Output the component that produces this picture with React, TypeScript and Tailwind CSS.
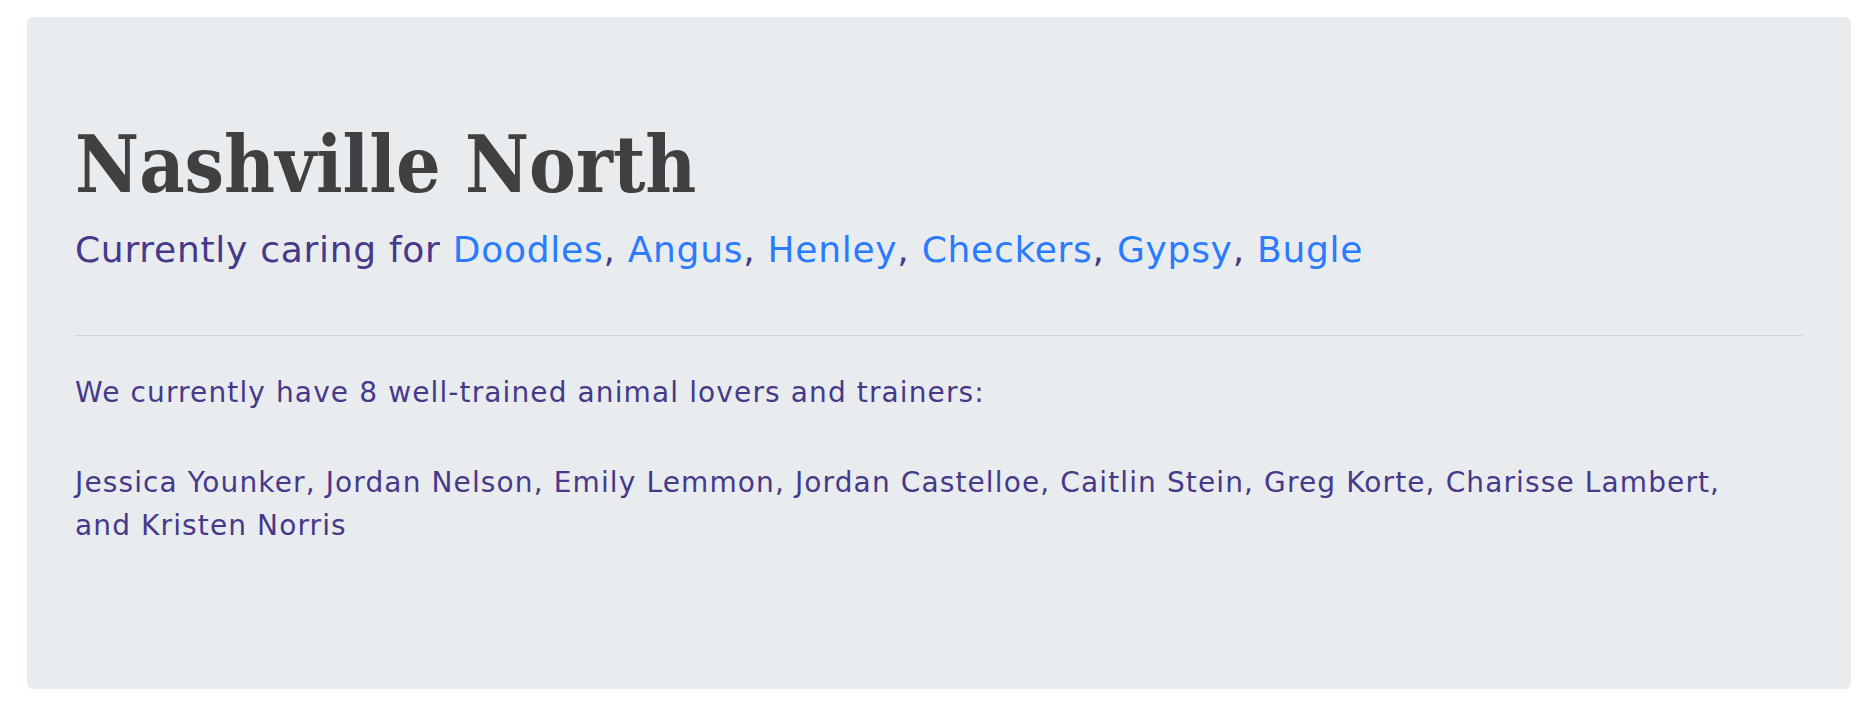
const dogs = ["Doodles", "Angus", "Henley", "Checkers", "Gypsy", "Bugle"]

const trainers =
  "Jessica Younker, Jordan Nelson, Emily Lemmon, Jordan Castelloe, Caitlin Stein, Greg Korte, Charisse Lambert,"

export default function App() {
  return (
    <div className="min-h-[711px] bg-white pt-[17px] pl-[27px] pr-[16px] pb-[22px]">
      {/* kennel card */}
      <div className="h-[672px] rounded-[6px] bg-[#e9ecef] px-[48px] pt-[101px]">
        <h1 className="font-['DejaVu_Serif',serif] font-bold [font-stretch:condensed] text-[78px] leading-[94px] text-[#404040]">
          Nashville North
        </h1>
        <p className="mt-[12px] font-['DejaVu_Sans',sans-serif] text-[36px] leading-[52px] tracking-[0.02em] text-[#46398a]">
          Currently caring for{" "}
          {dogs.map((dog, i) => (
            <span key={dog}>
              <a href="#" className="text-[#2a7bff]">
                {dog}
              </a>
              {i < dogs.length - 1 ? ", " : ""}
            </span>
          ))}
        </p>
        <hr className="mt-[59px] border-0 border-t border-[#d2d5d8]" />
        <div className="font-['DejaVu_Sans',sans-serif] text-[28px] tracking-[0.04em] text-[#46398a]">
          <p className="mt-[36px] leading-[42px]">
            We currently have 8 well-trained animal lovers and trainers:
          </p>
          <p className="mt-[47px] leading-[43px]">
            {trainers}
            <br />
            and Kristen Norris
          </p>
        </div>
      </div>
    </div>
  )
}
